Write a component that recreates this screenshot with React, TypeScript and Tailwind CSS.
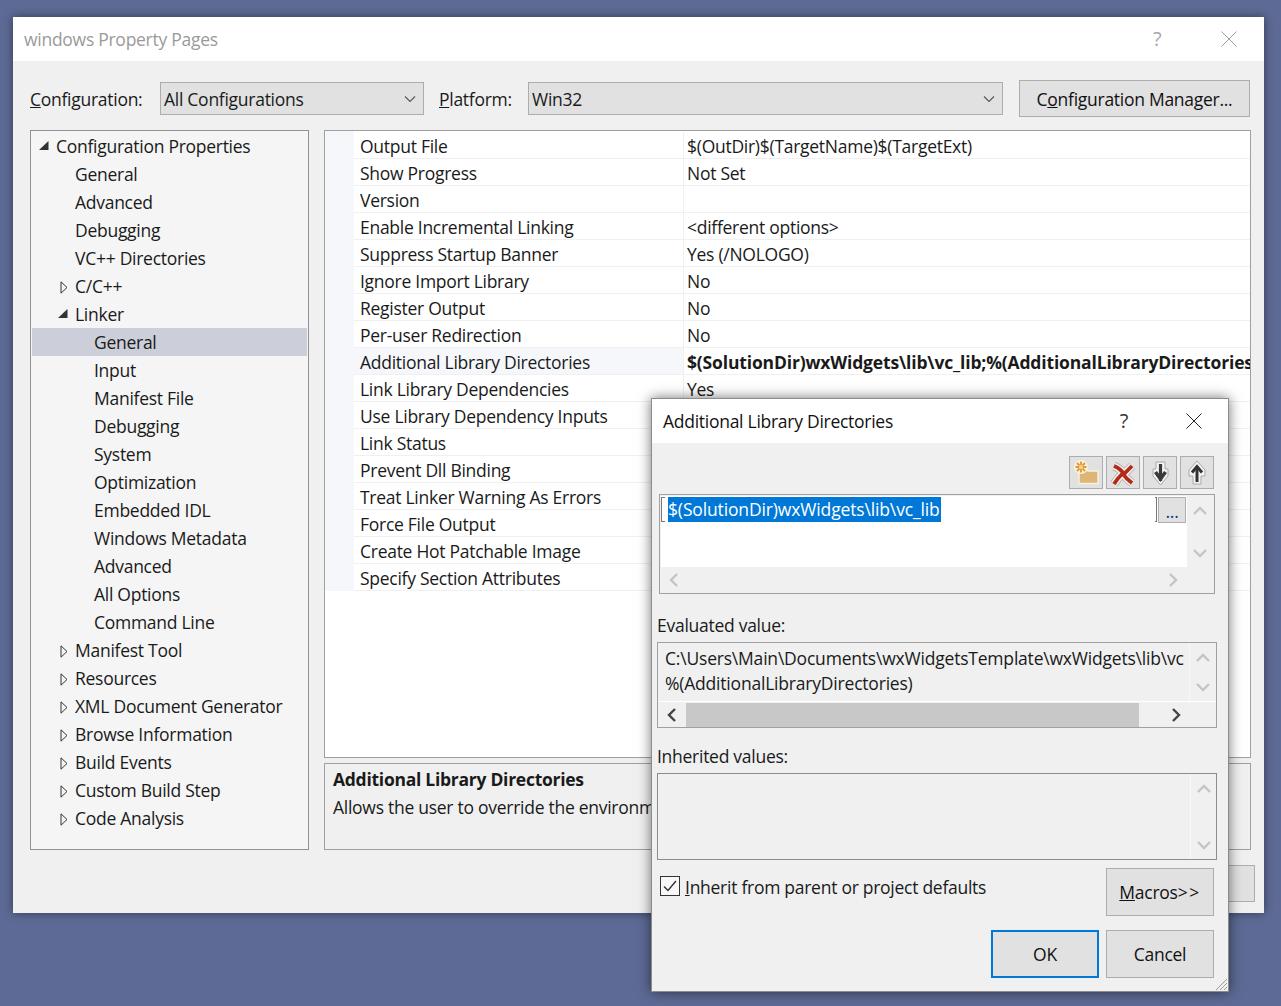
import { ReactNode } from "react";

const treeRows: { label: string; level: number; arrow?: "open" | "closed"; selected?: boolean }[] = [
  { label: "Configuration Properties", level: 0, arrow: "open" },
  { label: "General", level: 1 },
  { label: "Advanced", level: 1 },
  { label: "Debugging", level: 1 },
  { label: "VC++ Directories", level: 1 },
  { label: "C/C++", level: 1, arrow: "closed" },
  { label: "Linker", level: 1, arrow: "open" },
  { label: "General", level: 2, selected: true },
  { label: "Input", level: 2 },
  { label: "Manifest File", level: 2 },
  { label: "Debugging", level: 2 },
  { label: "System", level: 2 },
  { label: "Optimization", level: 2 },
  { label: "Embedded IDL", level: 2 },
  { label: "Windows Metadata", level: 2 },
  { label: "Advanced", level: 2 },
  { label: "All Options", level: 2 },
  { label: "Command Line", level: 2 },
  { label: "Manifest Tool", level: 1, arrow: "closed" },
  { label: "Resources", level: 1, arrow: "closed" },
  { label: "XML Document Generator", level: 1, arrow: "closed" },
  { label: "Browse Information", level: 1, arrow: "closed" },
  { label: "Build Events", level: 1, arrow: "closed" },
  { label: "Custom Build Step", level: 1, arrow: "closed" },
  { label: "Code Analysis", level: 1, arrow: "closed" },
];

const props: [string, string, boolean?][] = [
  ["Output File", "$(OutDir)$(TargetName)$(TargetExt)"],
  ["Show Progress", "Not Set"],
  ["Version", ""],
  ["Enable Incremental Linking", "<different options>"],
  ["Suppress Startup Banner", "Yes (/NOLOGO)"],
  ["Ignore Import Library", "No"],
  ["Register Output", "No"],
  ["Per-user Redirection", "No"],
  ["Additional Library Directories", "$(SolutionDir)wxWidgets\\lib\\vc_lib;%(AdditionalLibraryDirectories", true],
  ["Link Library Dependencies", "Yes"],
  ["Use Library Dependency Inputs", ""],
  ["Link Status", ""],
  ["Prevent Dll Binding", ""],
  ["Treat Linker Warning As Errors", ""],
  ["Force File Output", ""],
  ["Create Hot Patchable Image", ""],
  ["Specify Section Attributes", ""],
];

function Chevron({ dir, color = "#c4c4c4" }: { dir: "up" | "down" | "left" | "right"; color?: string }) {
  const pts = {
    up: "2,10 8,4 14,10",
    down: "2,5 8,11 14,5",
    left: "10,2 4,8 10,14",
    right: "5,2 11,8 5,14",
  }[dir];
  return (
    <svg width="16" height="16" viewBox="0 0 16 16" fill="none">
      <polyline points={pts} stroke={color} strokeWidth="2.4" />
    </svg>
  );
}

function ComboArrow() {
  return (
    <svg width="12" height="8" viewBox="0 0 12 8" fill="none">
      <polyline points="1,1.5 6,6.5 11,1.5" stroke="#555" strokeWidth="1.1" />
    </svg>
  );
}

function TreeArrow({ kind }: { kind: "open" | "closed" }) {
  if (kind === "open") {
    return (
      <svg width="10" height="9" viewBox="0 0 10 9">
        <polygon points="9.5,0 9.5,9 0,9" fill="#333" />
      </svg>
    );
  }
  return (
    <svg width="8" height="13" viewBox="0 0 8 13" fill="none">
      <polygon points="1,0.8 7,6.5 1,12.2" stroke="#333" strokeWidth="1" />
    </svg>
  );
}

function ToolButton({ children }: { children: ReactNode }) {
  return <div className="w-[34px] h-[33px] bg-[#e1e1e1] border border-[#adadad]">{children}</div>;
}

function Button({ children, className }: { children?: ReactNode; className: string }) {
  return <div className={`bg-[#e1e1e1] flex items-center justify-center text-[#111] ${className}`}>{children}</div>;
}

function VScroll({ className = "" }: { className?: string }) {
  return (
    <div className={`w-[26px] flex flex-col items-center justify-between pt-[8px] pb-[6px] ${className}`}>
      <Chevron dir="up" />
      <Chevron dir="down" />
    </div>
  );
}

function App() {
  return (
    <div
      className="relative w-[1281px] h-[1006px] bg-[#5d6a95] pt-[17px] pl-[13px] overflow-hidden text-[17.5px] leading-[24px] text-[#1a1a1a] tracking-[-0.27px]"
      style={{ fontFamily: '"Open Sans", "Noto Sans", sans-serif' }}
    >
      {/* main window */}
      <div className="w-[1251px] h-[896px] bg-[#f0f0f0] shadow-[0_0_9px_rgba(0,0,0,0.45)] flex flex-col">
        <div className="h-[44px] shrink-0 bg-white flex items-center pl-[11px] text-[#9a9a9a]">
          <span className="flex-1">windows Property Pages</span>
          <span className="w-[14px] mr-[54px] text-[#a8a8a8] text-[20px]">?</span>
          <svg width="16" height="16" viewBox="0 0 16 16" className="mr-[27px]">
            <path d="M0.5 0.5 L15.5 15.5 M15.5 0.5 L0.5 15.5" stroke="#9c9c9c" strokeWidth="1" />
          </svg>
        </div>

        <div className="flex items-center h-[37px] mt-[19px] ml-[17px]">
          <span className="w-[130px]"><u>C</u>onfiguration:</span>
          <div className="w-[264px] h-[33px] bg-[#e1e1e1] border border-[#adadad] flex items-center justify-between pl-[3px] pr-[7px]">
            <span>All Configurations</span>
            <ComboArrow />
          </div>
          <span className="w-[89px] ml-[15px]"><u>P</u>latform:</span>
          <div className="w-[475px] h-[33px] bg-[#e1e1e1] border border-[#adadad] flex items-center justify-between pl-[3px] pr-[7px]">
            <span>Win32</span>
            <ComboArrow />
          </div>
          <Button className="w-[231px] h-[37px] ml-[16px] border border-[#adadad]"><span>C<u>o</u>nfiguration Manager...</span></Button>
        </div>

        <div className="flex mt-[13px] ml-[17px]">
          <div className="w-[279px] h-[720px] bg-[#f5f5f5] border border-[#8f9196] p-px">
            {treeRows.map((r, i) => (
              <div
                key={i}
                className={`relative h-[28px] flex items-center ${r.selected ? "bg-[#ccced9]" : ""} ${
                  r.level === 0 ? "pl-[24px]" : r.level === 1 ? "pl-[43px]" : "pl-[62px]"
                }`}
              >
                {r.arrow && (
                  <span className={`absolute top-[9px] ${r.level === 0 ? "left-[7px]" : r.arrow === "open" ? "left-[26px]" : "left-[28px]"}`}>
                    <TreeArrow kind={r.arrow} />
                  </span>
                )}
                {r.label}
              </div>
            ))}
          </div>

          <div className="ml-[15px] w-[927px]">
            <div className="h-[628px] bg-white border border-[#a0a0a0] pl-[29px] pt-px relative overflow-hidden">
              <div className="absolute left-0 top-0 w-[29px] h-[460px] bg-[#f5f7fb]" />
              {props.map(([name, value, hi], i) => (
                <div key={i} className="flex h-[27px] border-b border-[#f0f0f0] whitespace-nowrap">
                  <div className={`w-[330px] shrink-0 pl-[6px] pt-[2px] border-r border-[#f0f0f0] flex items-center ${hi ? "bg-[#f5f7fb]" : ""}`}>
                    {name}
                  </div>
                  <div className={`pl-[3px] pt-[2px] flex items-center ${hi ? "font-bold tracking-[-0.16px]" : ""}`}>{value}</div>
                </div>
              ))}
            </div>
            <div className="mt-[5px] h-[87px] border border-[#a0a0a0] pl-[8px] pt-px whitespace-nowrap overflow-hidden">
              <div className="font-bold leading-[28px]">Additional Library Directories</div>
              <div className="leading-[28px]">Allows the user to override the environm</div>
            </div>
          </div>
        </div>

        <div className="flex justify-end mr-[9px] mt-[15px]">
          <Button className="w-[108px] h-[37px] border border-[#adadad]" />
        </div>
      </div>

      {/* Additional Library Directories dialog */}
      <div className="absolute left-[651px] top-[398px] w-[578px] h-[594px] bg-[#f0f0f0] border border-[#8c8c8c] shadow-[0_0_12px_rgba(0,0,0,0.55)] flex flex-col">
        <div className="h-[44px] shrink-0 bg-white flex items-center pl-[11px]">
          <span className="flex-1 text-[#111]">Additional Library Directories</span>
          <span className="mr-[58px] text-[20px] text-[#333]">?</span>
          <svg width="16" height="16" viewBox="0 0 16 16" className="mr-[26px]">
            <path d="M0.5 0.5 L15.5 15.5 M15.5 0.5 L0.5 15.5" stroke="#222" strokeWidth="1" />
          </svg>
        </div>

        <div className="flex justify-end gap-[3px] mt-[13px] mr-[14px]">
          <ToolButton>
            <svg width="32" height="31" viewBox="0 0 32 31">
              <path d="M9 12 H16 L18 14 H28 V26.5 H9 Z" fill="#deb574" stroke="#f8f1e2" strokeWidth="1.4" />
              <circle cx="11" cy="10" r="7" fill="#fbf1df" />
              <path d="M11 4.5 V15.5 M5.5 10 H16.5 M7 6 L15 14 M15 6 L7 14" stroke="#de9a3a" strokeWidth="1.9" />
              <circle cx="11" cy="10" r="2.2" fill="#f4cf8e" />
            </svg>
          </ToolButton>
          <ToolButton>
            <svg width="32" height="31" viewBox="0 0 32 31" fill="none">
              <path d="M7 9 C12 11 15 14 17 17 C20 14 22 12 25 9 M7 27 C10 22 13 19 15.5 16.5 C18 20 21 23 25 26" stroke="#a8a8a8" strokeWidth="8.4" />
              <path d="M7 9 C12 11 15 14 17 17 C20 14 22 12 25 9 M7 27 C10 22 13 19 15.5 16.5 C18 20 21 23 25 26" stroke="#f3efee" strokeWidth="7" />
              <path d="M7 9 C12 11 15 14 17 17 C20 14 22 12 25 9 M7 27 C10 22 13 19 15.5 16.5 C18 20 21 23 25 26" stroke="#b32a18" strokeWidth="3.8" />
            </svg>
          </ToolButton>
          <ToolButton>
            <svg width="32" height="31" viewBox="0 0 32 31" fill="none">
              <path d="M12 5 H21 V12 H24 V19 L16.5 28 L9 19 V12 H12 Z" fill="#f4f4f4" stroke="#a8a8a8" strokeWidth="1" />
              <path d="M16.5 7 V24" stroke="#3a3a3a" strokeWidth="3.2" />
              <path d="M11.5 15 L16.5 22 L21.5 15" stroke="#3a3a3a" strokeWidth="3.6" />
            </svg>
          </ToolButton>
          <ToolButton>
            <svg width="32" height="31" viewBox="0 0 32 31" fill="none">
              <path d="M16 4 L24 13 V19 H20 V27 H12 V19 H8 V13 Z" fill="#f4f4f4" stroke="#a8a8a8" strokeWidth="1" />
              <path d="M16 9 V25" stroke="#333" strokeWidth="3" />
              <path d="M11 15.5 L16 9.5 L21 15.5" stroke="#333" strokeWidth="3" />
            </svg>
          </ToolButton>
        </div>

        <div className="mt-[5px] ml-[7px] w-[556px] h-[100px] border border-[#a0a0a0] p-px flex flex-col">
          <div className="flex h-[71px]">
            <div className="w-[527px] bg-white relative">
              <div className="absolute left-0 top-[1px] w-[4px] h-[25px] border border-r-0 border-[#777]" />
              <div className="absolute left-[494px] top-[1px] w-[2px] h-[25px] border border-l-0 border-[#777]" />
              <div className="absolute left-[497px] top-[1px] w-[28px] h-[26px] bg-[#e1e1e1] border border-[#adadad] flex justify-center text-[#0a3a8a] leading-[26px]">...</div>
              <span className="absolute left-[7px] top-[1px] h-[25px] w-[273px] bg-[#0078d7] text-white whitespace-nowrap leading-[25px] tracking-[-0.14px]">$(SolutionDir)wxWidgets\lib\vc_lib</span>
            </div>
            <VScroll />
          </div>
          <div className="flex-1 flex items-center justify-between pl-[6px] pr-[32px]">
            <Chevron dir="left" />
            <Chevron dir="right" />
          </div>
        </div>

        <div className="mt-[19px] ml-[5px] leading-[24px]">Evaluated value:</div>
        <div className="mt-[5px] ml-[5px] w-[560px] h-[86px] border border-[#a0a0a0] flex flex-col">
          <div className="flex h-[59px] border-b border-white">
            <div className="w-[532px] pl-[7px] pt-[3px] leading-[25px] whitespace-nowrap overflow-hidden border-r border-[#f8f8f8] tracking-[-0.2px]">
              C:\Users\Main\Documents\wxWidgetsTemplate\wxWidgets\lib\vc
              <br />
              %(AdditionalLibraryDirectories)
            </div>
            <VScroll />
          </div>
          <div className="flex-1 flex items-center pl-[1px] pr-[32px]">
            <div className="w-[27px] flex justify-center"><Chevron dir="left" color="#444" /></div>
            <div className="w-[453px] h-[24px] bg-[#c8c8c8]" />
            <div className="flex-1 flex justify-end"><Chevron dir="right" color="#444" /></div>
          </div>
        </div>

        <div className="mt-[16px] ml-[5px] leading-[24px]">Inherited values:</div>
        <div className="mt-[5px] ml-[5px] w-[560px] h-[87px] border border-[#8c8c8c] flex justify-end">
          <VScroll className="border-l border-[#f8f8f8]" />
        </div>

        <div className="flex items-start mt-[8px] ml-[8px]">
          <div className="mt-[8px] w-[20px] h-[20px] border border-[#333] bg-[#f8f8f8] flex items-center justify-center">
            <svg width="16" height="14" viewBox="0 0 16 14" fill="none">
              <polyline points="2,7.5 6,11.5 14,2" stroke="#333" strokeWidth="1.4" />
            </svg>
          </div>
          <span className="ml-[5px] mt-[7px] w-[421px]"><u>I</u>nherit from parent or project defaults</span>
          <Button className="w-[108px] h-[48px] border border-[#adadad]"><span><u>M</u>acros<span className="tracking-[1.5px]">&gt;&gt;</span></span></Button>
        </div>

        <div className="flex justify-end gap-[7px] mt-[14px] mr-[14px]">
          <Button className="w-[108px] h-[48px] border-2 border-[#0078d7]">OK</Button>
          <Button className="w-[108px] h-[48px] border border-[#adadad]">Cancel</Button>
        </div>

        <svg width="14" height="14" viewBox="0 0 14 14" className="absolute right-0 bottom-0">
          <path d="M13 2 L2 13 M13 6 L6 13 M13 10 L10 13" stroke="#9a9a9a" strokeWidth="1" />
        </svg>
      </div>
    </div>
  );
}

export default App;
